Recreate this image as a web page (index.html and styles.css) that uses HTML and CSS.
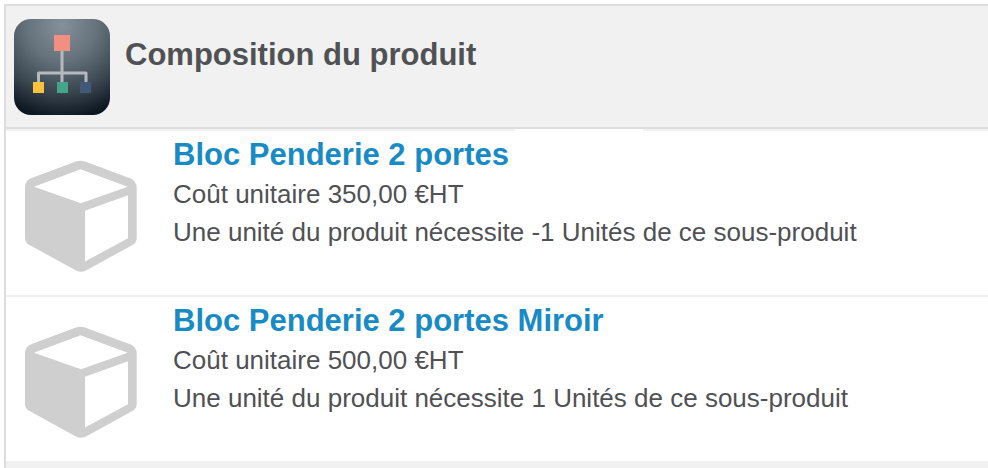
FILE: index.html
```html
<!DOCTYPE html>
<html lang="fr">
<head>
    <meta charset="UTF-8">
    <meta name="viewport" content="width=device-width, initial-scale=1.0">
    <title>Composition du produit</title>
    <link rel="stylesheet" href="styles.css">
</head>
<body>
    <!-- cube shared by the product rows -->
    <svg class="symbols" aria-hidden="true">
        <symbol id="cube" viewBox="0 0 112 112">
            <path fill="#cfcfcf" fill-rule="evenodd" d="M51 1.5Q55.7 -.2 60 1.5L105 18.3Q111.7 21 111.7 28V78Q111.7 82.6 107.5 85L61 110.5Q56 113 51 110.5L4 84.7Q0 82.5 0 78V28Q0 21 6 18.3ZM55.5 9.3L9 26.7L56 43.3L102.7 26.7ZM60 50.8V101.5L103 78.3V35.2Z"/>
        </symbol>
    </svg>
    <section class="composition">
        <header class="composition-header">
            <svg class="header-icon" viewBox="0 0 96 96" aria-hidden="true">
                <defs>
                    <radialGradient id="shade" gradientUnits="userSpaceOnUse" cx="48" cy="6" r="102">
                        <stop offset="0" stop-color="#84919a"/>
                        <stop offset="0.35" stop-color="#66727b"/>
                        <stop offset="0.65" stop-color="#3b4751"/>
                        <stop offset="0.9" stop-color="#0f1923"/>
                        <stop offset="1" stop-color="#08111a"/>
                    </radialGradient>
                </defs>
                <rect width="96" height="96" rx="17" fill="url(#shade)"/>
                <path d="M24.5 64V54H72V64M48 31V64" fill="none" stroke="#b5b9bf" stroke-width="3" stroke-linejoin="round"/>
                <rect x="40" y="16" width="16" height="16" fill="#f28e82"/>
                <rect x="19" y="63" width="11" height="11" fill="#fbc23c"/>
                <rect x="43" y="63" width="11" height="11" fill="#45a58a"/>
                <rect x="66" y="63" width="11" height="11" fill="#435878"/>
            </svg>
            <h1 class="composition-title">Composition du produit</h1>
        </header>
        <ul class="product-list">
            <li class="product">
                <svg class="product-icon" aria-hidden="true"><use href="#cube"/></svg>
                <div class="product-info">
                    <h2 class="product-name"><a href="#">Bloc Penderie 2 portes</a></h2>
                    <p>Coût unitaire 350,00 €HT</p>
                    <p>Une unité du produit nécessite -1 Unités de ce sous-produit</p>
                </div>
            </li>
            <li class="product">
                <svg class="product-icon" aria-hidden="true"><use href="#cube"/></svg>
                <div class="product-info">
                    <h2 class="product-name"><a href="#">Bloc Penderie 2 portes Miroir</a></h2>
                    <p>Coût unitaire 500,00 €HT</p>
                    <p>Une unité du produit nécessite 1 Unités de ce sous-produit</p>
                </div>
            </li>
        </ul>
        <footer class="composition-footer"></footer>
    </section>
</body>
</html>
```

FILE: styles.css
```css
* {
    box-sizing: border-box;
}
body {
    margin: 0;
    padding: 4px 0 0 4px;
    background: white;
    color: #505155;
    font-family: "Liberation Sans", Arial, sans-serif;
    font-size: 26px;
    line-height: 38px;
}
h1, h2, p, ul {
    margin: 0;
    padding: 0;
}
.symbols {
    display: none;
}
.composition {
    border-top: 2px solid #dddddd;
    border-left: 2px solid #dddddd;
}
.composition-header {
    display: flex;
    gap: 15px;
    padding: 13px 8px 12px;
    background: #f1f1f1;
    border-bottom: 2px solid #dddddd;
}
.header-icon {
    flex: none;
    width: 96px;
    height: 96px;
}
.composition-title {
    padding-top: 16px;
    font-size: 31px;
    line-height: 40px;
}
.product-list {
    list-style: none;
}
.product {
    display: flex;
    gap: 36px;
    padding: 4px 19px 44px;
    border-top: 2px solid #f1f1f1;
}
/* light notch in the line under the header */
.product:first-child {
    border-image: linear-gradient(to right, #f1f1f1 509px, white 509px, white 636px, #f1f1f1 636px) 2;
}
.product-icon {
    flex: none;
    width: 112px;
    height: 112px;
    margin-top: 25px;
    /* the icon hangs below the text without making the row taller */
    margin-bottom: -25px;
}
.product-name {
    font-size: 31px;
    line-height: 40px;
}
.product-name a {
    color: #188bc5;
    text-decoration: none;
}
.composition-footer {
    height: 7px;
    background: #f1f1f1;
}
```
